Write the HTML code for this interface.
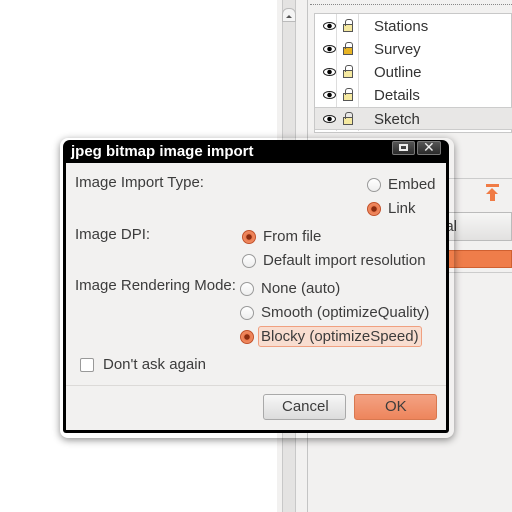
<!DOCTYPE html>
<html><head><style>
*{margin:0;padding:0;box-sizing:border-box}
body{width:512px;height:512px;overflow:hidden;background:#fff;position:relative;font-family:"Liberation Sans","DejaVu Sans",sans-serif;font-size:15px;color:#3c3c3c}
.a{position:absolute}
.t{position:absolute;white-space:nowrap;line-height:16px}
.r{position:absolute;width:14px;height:14px;border-radius:50%;border:1px solid #9a9a9a;background:linear-gradient(#fff,#eee)}
.r.on{border-color:#c2512a;background:radial-gradient(circle,#8a2c10 0 2.5px,#ec7a4e 3px,#f0936c 7px)}
.row{position:absolute;left:315px;width:197px;height:23px}
.eye{position:absolute;left:8px;top:7px;width:13px;height:8px;border-radius:50%;border:1.5px solid #222;background:radial-gradient(circle,#000 0 2px,#fff 2.5px)}
.lk{position:absolute;left:28px;top:9px;width:10px;height:8px;border:1px solid #555;background:#f5e9a0}
.lk:before{content:"";position:absolute;left:1px;top:-6px;width:6px;height:6px;border:1px solid #555;border-bottom:none;border-radius:3px 3px 0 0}
.rt{position:absolute;left:59px;top:3px;color:#333}
</style></head><body>
<div class="a" style="left:277px;top:0;width:235px;height:512px;background:#f2f1f0"></div>
<div class="a" style="left:282px;top:0;width:14px;height:512px;background:#e4e3e2;border-left:1px solid #c8c8c8;border-right:1px solid #c8c8c8"></div>
<div class="a" style="left:282px;top:8px;width:14px;height:14px;background:#f4f4f4;border:1px solid #bbb;border-radius:6px 6px 0 0"></div>
<div class="a" style="left:286px;top:12px;border:3px solid transparent;border-bottom:3px solid #555;width:0;height:0"></div>
<div class="a" style="left:307px;top:0;width:1px;height:512px;background:#c4c4c4"></div>
<div class="a" style="left:310px;top:0;width:202px;height:5px;border-bottom:1px dotted #888"></div>
<div class="a" style="left:314px;top:13px;width:198px;height:120px;background:#fff;border:1px solid #c8c8c8"></div>
<div class="a" style="left:336px;top:14px;width:1px;height:117px;background:#ddd"></div>
<div class="a" style="left:358px;top:14px;width:1px;height:117px;background:#ddd"></div>
<div class="row" style="top:15px"><div class="eye"></div><div class="lk"></div><div class="rt">Stations</div></div>
<div class="row" style="top:38px"><div class="eye"></div><div class="lk" style="background:#e8b424"></div><div class="rt">Survey</div></div>
<div class="row" style="top:61px"><div class="eye"></div><div class="lk"></div><div class="rt">Outline</div></div>
<div class="row" style="top:84px"><div class="eye"></div><div class="lk"></div><div class="rt">Details</div></div>
<div class="row" style="top:107px;background:#e8e7e6;border-top:1px solid #ccc;border-bottom:1px solid #ccc"><div class="eye"></div><div class="lk"></div><div class="rt">Sketch</div></div>
<div class="a" style="left:436px;top:178px;width:76px;height:1px;background:#ccc"></div>
<div class="a" style="left:486px;top:184px;width:13px;height:3px;background:#f07b45"></div>
<div class="a" style="left:486px;top:188px;border:6px solid transparent;border-bottom:6px solid #f07b45;border-top:none;width:13px;height:0;border-left-width:6px;border-right-width:6px;width:0;left:486px"></div>
<div class="a" style="left:490px;top:193px;width:5px;height:8px;background:#f07b45"></div>
<div class="a" style="left:436px;top:212px;width:76px;height:29px;background:linear-gradient(#f6f6f5,#e2e1e0);border:1px solid #bbb"></div>
<div class="t" style="left:437px;top:219px">nal</div>
<div class="a" style="left:440px;top:250px;width:72px;height:18px;background:#ef7d4a;border:1px solid #d06030"></div>
<div class="a" style="left:440px;top:272px;width:72px;height:1px;background:#ccc"></div>

<div class="a" style="left:60px;top:138px;width:394px;height:300px;border-radius:8px;box-shadow:0 2px 8px rgba(0,0,0,.45)"></div>
<div class="a" style="left:63px;top:140px;width:386px;height:293px;background:#000;border-radius:7px 7px 3px 3px"></div>
<div class="a" style="left:66px;top:163px;width:380px;height:267px;background:#f2f1f0"></div>
<div class="t" style="left:71px;top:144px;color:#fff;font-weight:bold;font-size:15px">jpeg bitmap image import</div>
<div class="a" style="left:392px;top:141px;width:23px;height:14px;background:linear-gradient(#555,#2a2a2a);border:1px solid #777;border-radius:2px"></div>
<div class="a" style="left:399px;top:144px;width:9px;height:7px;border:2px solid #eee"></div>
<div class="a" style="left:417px;top:141px;width:24px;height:14px;background:linear-gradient(#555,#2a2a2a);border:1px solid #777;border-radius:2px"></div>
<div class="t" style="left:423px;top:139px;color:#eee;font-weight:bold;font-size:14px">✕</div>

<div class="t" style="left:75px;top:175px">Image Import Type:</div>
<div class="r" style="left:367px;top:178px"></div><div class="t" style="left:388px;top:177px">Embed</div>
<div class="r on" style="left:367px;top:202px"></div><div class="t" style="left:388px;top:201px">Link</div>
<div class="t" style="left:75px;top:227px">Image DPI:</div>
<div class="r on" style="left:242px;top:230px"></div><div class="t" style="left:263px;top:229px">From file</div>
<div class="r" style="left:242px;top:254px"></div><div class="t" style="left:263px;top:253px">Default import resolution</div>
<div class="t" style="left:75px;top:278px">Image Rendering Mode:</div>
<div class="r" style="left:240px;top:282px"></div><div class="t" style="left:261px;top:281px">None (auto)</div>
<div class="r" style="left:240px;top:306px"></div><div class="t" style="left:261px;top:305px">Smooth (optimizeQuality)</div>
<div class="r on" style="left:240px;top:330px"></div>
<div class="a" style="left:258px;top:326px;width:164px;height:21px;background:#f8ddd0;border:1px solid #f0a080;border-radius:3px"></div>
<div class="t" style="left:261px;top:329px">Blocky (optimizeSpeed)</div>
<div class="a" style="left:80px;top:358px;width:14px;height:14px;border:1px solid #999;border-radius:2px;background:#fff"></div>
<div class="t" style="left:103px;top:357px">Don't ask again</div>
<div class="a" style="left:66px;top:385px;width:380px;height:1px;background:#dcdad8"></div>
<div class="a" style="left:263px;top:394px;width:83px;height:26px;border:1px solid #a9a9a9;border-radius:3px;background:linear-gradient(#f7f7f7,#dcdcdc)"></div>
<div class="t" style="left:282px;top:399px">Cancel</div>
<div class="a" style="left:354px;top:394px;width:83px;height:26px;border:1px solid #d87850;border-radius:3px;background:linear-gradient(#f3a283,#ee855c)"></div>
<div class="t" style="left:385px;top:399px">OK</div>
</body></html>
